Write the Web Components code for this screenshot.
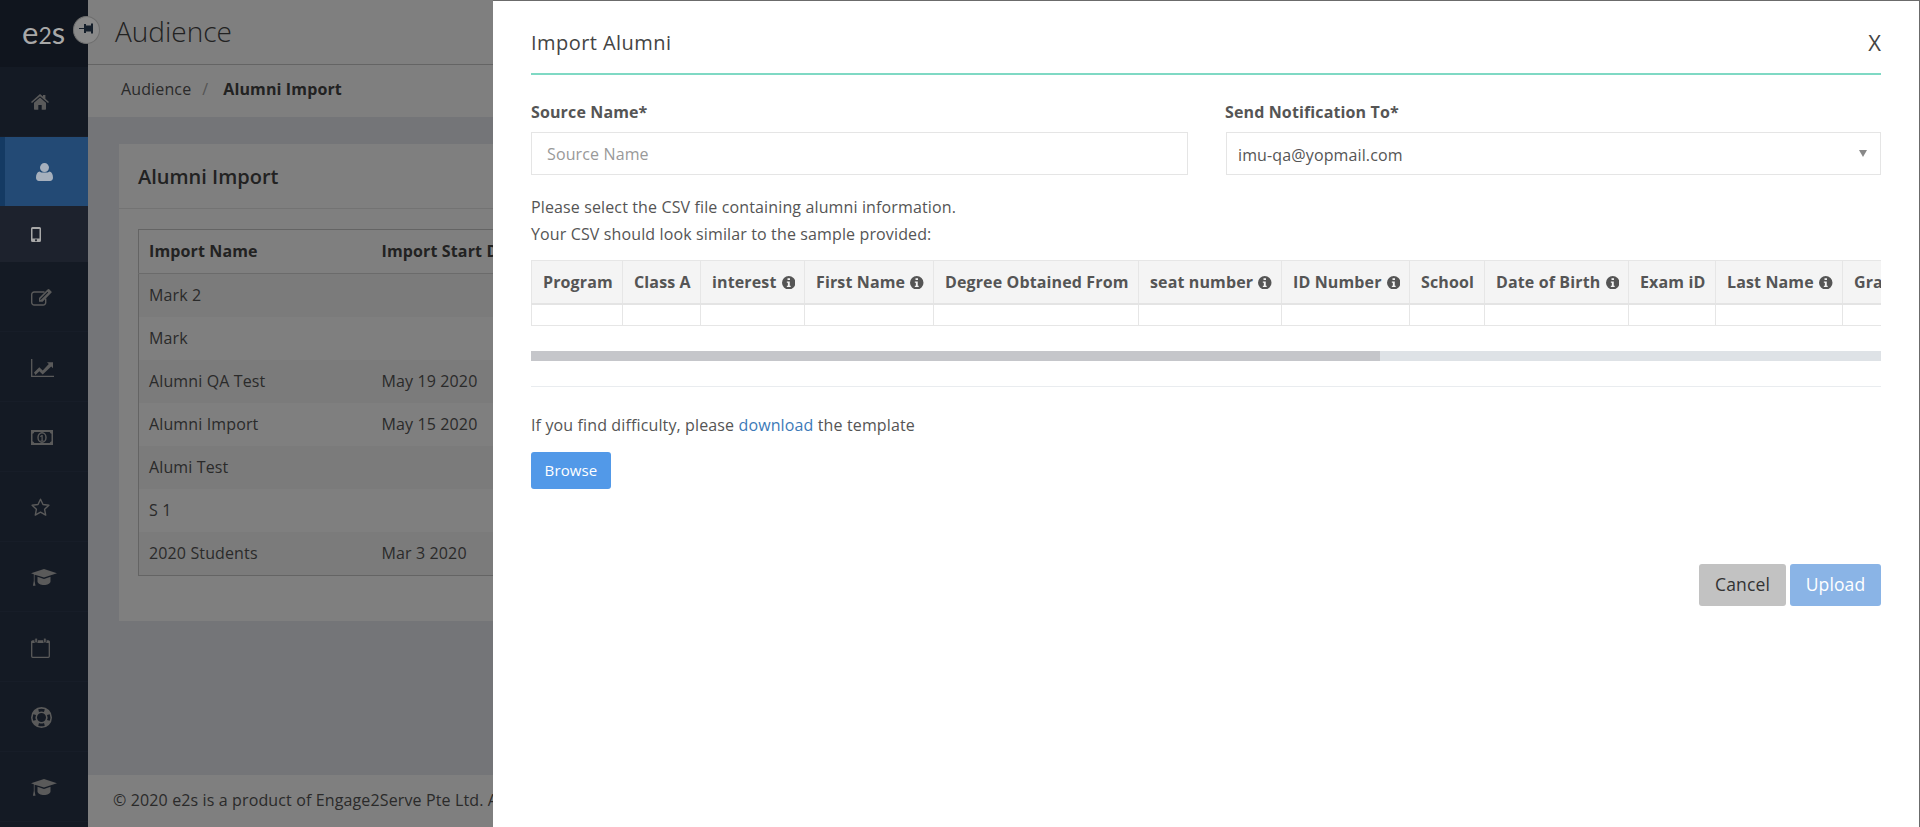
<!DOCTYPE html>
<html lang="en"><head><meta charset="utf-8"><title>Import Alumni</title>
<style>
html,body{margin:0;padding:0;height:100%;overflow:hidden}
body{font-family:"Open Sans","Noto Sans",sans-serif;font-size:14px;color:#444}
</style></head><body>
<e2s-app></e2s-app>
<script>
const ICONS={
home:'<svg width="18" height="16" viewBox="0 0 18 16"><path fill="currentColor" d="M9 0 L12 2.6V1h2.4v3.7L18 8l-1 1.1L9 2.2 1 9.1 0 8z"/><path fill="currentColor" d="M9 3.6l6 5.2V15a.7.7 0 0 1-.7.7H10.7V11H7.3v4.7H3.7A.7.7 0 0 1 3 15V8.8z"/></svg>',
user:'<svg width="17" height="18" viewBox="0 0 17 18" style="margin-left:5px"><circle cx="8.5" cy="4.6" r="4.5" fill="currentColor"/><path fill="currentColor" d="M3.4 8.4C5 10 12 10 13.6 8.4 16 9 17 11.500 17 14.800 17 16.800 15.800 18 14 18H3C1.200 18 0 16.800 0 14.800 0 11.500 1 9 3.400 8.400z"/></svg>',
mobile:'<svg width="10" height="15" viewBox="0 0 10 15"><path fill="currentColor" fill-rule="evenodd" d="M1.500 0h7A1.500 1.500 0 0 1 10 1.500v12A1.500 1.500 0 0 1 8.500 15h-7A1.500 1.500 0 0 1 0 13.500v-12A1.500 1.500 0 0 1 1.500 0zM1.500 2v9.500h7V2zM5 12.200a1 1 0 1 0 .01 0z"/></svg>',
edit:'<svg width="21" height="17" viewBox="0 0 21 17"><path fill="none" stroke="currentColor" stroke-width="1.400" d="M13.500 3H3.200A2.500 2.500 0 0 0 .7 5.500v8a2.500 2.500 0 0 0 2.500 2.500h9a2.500 2.500 0 0 0 2.500-2.500V9.500"/><path fill="currentColor" d="M8 9l8-8 .9-.7a1 1 0 0 1 1.300 0l2.200 2.200a1 1 0 0 1 0 1.300l-.8.800-8 8.200H8z"/><path fill="#141a24" d="M9 10.300l7.500-7.500.7.700L9.700 11z"/></svg>',
chart:'<svg width="23" height="18" viewBox="0 0 23 18"><path fill="none" stroke="currentColor" stroke-width="1.300" d="M.7 0v17.300H23"/><path fill="currentColor" d="M3 13.500l5.300-5.300 3.400 3.200L17.800 5 16 3.200h6v6l-1.800-1.800-8.500 8.200-3.400-3.300-3.800 3.600z"/></svg>',
money:'<svg width="22" height="15" viewBox="0 0 22 15"><path fill="currentColor" fill-rule="evenodd" d="M0 0h22v15H0zM3.300 2A2.500 2.500 0 0 1 1.500 3.800v7.400A2.500 2.500 0 0 1 3.300 13h15.400a2.500 2.500 0 0 1 1.800-1.800V3.800A2.500 2.500 0 0 1 18.700 2z"/><ellipse cx="11" cy="7.500" rx="4" ry="4.800" fill="none" stroke="currentColor" stroke-width="1.400"/><path fill="currentColor" d="M9.500 10.400h1V6.400l-1 .7-.5-.8 1.700-1.300h1v5.400h1v.9H9.500z"/></svg>',
star:'<svg width="19" height="19" viewBox="0 0 19 19"><path fill="none" stroke="currentColor" stroke-width="1.400" stroke-linejoin="round" d="M9.500 1.200l2.500 5.300 5.900.8-4.300 4 1.100 5.800-5.200-2.900-5.200 2.900 1.100-5.800-4.300-4 5.900-.8z"/></svg>',
grad:'<svg width="26" height="18" viewBox="0 0 26 18"><path fill="currentColor" d="M13 0l13 4.200L13 8.600 5.600 6.200 3.600 5.700V12l.9 4.700H1.900L2.800 12V5.200L0 4.200z"/><path fill="currentColor" d="M6.500 7.800L13 10l6.500-2.200v4.600c0 1.900-3.200 3.500-6.500 3.500s-6.500-1.600-6.500-3.500z"/></svg>',
cal:'<svg width="19" height="20" viewBox="0 0 19 20"><path fill="none" stroke="currentColor" stroke-width="1.300" d="M1.700 2.900h15.600a1 1 0 0 1 1 1v14.400a1 1 0 0 1-1 1H1.700a1 1 0 0 1-1-1V3.900a1 1 0 0 1 1-1z"/><path fill="currentColor" d="M.7 3h17.600v2H.7z"/><rect x="3.800" y="0" width="2.600" height="5" rx="1.200" fill="currentColor" stroke="#141a24" stroke-width=".8"/><rect x="12.600" y="0" width="2.600" height="5" rx="1.200" fill="currentColor" stroke="#141a24" stroke-width=".8"/></svg>',
ring:'<svg width="21" height="21" viewBox="0 0 21 21"><path fill="currentColor" fill-rule="evenodd" d="M10.500 0a10.500 10.500 0 1 1 0 21 10.500 10.500 0 0 1 0-21zM10.500 6a4.500 4.500 0 1 0 0 9 4.500 4.500 0 0 0 0-9z"/><path fill="#141a24" d="M7.200 2.300a8.800 8.800 0 0 1 6.600 0L13 5a6 6 0 0 0-5 0zM18.700 7.200a8.800 8.800 0 0 1 0 6.600L16 13a6 6 0 0 0 0-5zM13.800 18.700a8.800 8.800 0 0 1-6.600 0L8 16a6 6 0 0 0 5 0zM2.300 13.800a8.800 8.800 0 0 1 0-6.600L5 8a6 6 0 0 0 0 5z"/></svg>',
pin:'<svg width="15" height="13" viewBox="0 0 15 13"><path fill="currentColor" d="M0 6h5V2h2v1.500h5V1.500h2v10h-2V9.500H7V11H5V7H0z"/></svg>'
};
function def(name,html,render){
  customElements.define(name,class extends HTMLElement{
    constructor(){super();const r=this.attachShadow({mode:'open'});r.innerHTML=html;}
    connectedCallback(){if(render)render.call(this,this.shadowRoot);}
  });
}
def('e2s-nav-item',`<style>
:host{display:flex;align-items:center;padding:2px 0 0 31px;box-sizing:border-box;height:70px;color:#5a5a5a;border-bottom:1px solid #171d28}
:host([icon=home]){padding-top:0}
:host([active]){height:69px;color:#a6b0bd;background:#234a75;border-left:5px solid #143a63;padding:0 0 0 26px;border-bottom:0}
:host([sub]){height:56px;background:#1d222d;border-bottom:0;color:#a8a8a8;padding-top:0}
svg{display:block}
</style><span id="i"></span>`,function(r){r.getElementById('i').innerHTML=ICONS[this.getAttribute('icon')];r.getElementById('i').style.display='block';});

def('e2s-sidebar',`<style>
:host{display:block;background:#141a24;position:relative;z-index:6}
.logo{height:67px;background:#10151e;display:flex;align-items:center;padding:0 0 3px 22px;box-sizing:border-box;color:#a8a8a8;font:400 31px/1 "Lato","Open Sans",sans-serif}
.logo small{font-size:23px}
.pin{position:absolute;left:73px;top:16px;width:27px;height:28px;box-sizing:border-box;border-radius:50%;background:#898989;border:1px solid #6f6f6f;color:#16202c;display:flex;align-items:center;justify-content:center}
.pin svg{display:block;margin-top:-3px}
</style><div class="logo"><span>e<small>2</small>s</span></div><div class="pin" id="pin"></div><slot></slot>`,function(r){r.getElementById('pin').innerHTML=ICONS.pin;});

def('e2s-topbar',`<style>
:host{display:flex;align-items:center;height:65px;box-sizing:border-box;background:#fff;border-bottom:1px solid #c8c8c8;padding:0 0 3px 27px;font:300 28px/1 "Open Sans",sans-serif;color:#444}
</style><slot></slot>`);
def('e2s-crumbs',`<style>
:host{display:flex;align-items:center;height:52px;box-sizing:border-box;background:#fff;padding:0 0 5px 33px;font:400 16px/1 "Open Sans",sans-serif;letter-spacing:.13px;color:#555}
.s{color:#aaa;margin:0 15px 0 11px}b{font-weight:700;color:#444}
</style><span>Audience</span><span class="s">/</span><b><slot></slot></b>`);
def('e2s-card',`<style>
:host{display:block;background:#fff;height:477px;box-sizing:border-box}
.h{height:65px;box-sizing:border-box;border-bottom:1px solid #e6e6e6;display:flex;align-items:center;padding:2px 19px 0;font:600 20px/1 "Open Sans",sans-serif;color:#444}
.b{padding:20px 19px}
</style><div class="h"><slot name="title"></slot></div><div class="b"><slot></slot></div>`);
def('e2s-import-table',`<style>
:host{display:block;font:400 16px/1 "Open Sans",sans-serif;letter-spacing:.13px;color:#555}
table{border-collapse:collapse;width:100%;table-layout:fixed;border:1px solid #c8c8c8}
th{font-weight:700;text-align:left;height:44px;padding:0 0 2px 10px;color:#444;border-bottom:1px solid #d6d6d6;box-sizing:border-box}
td{height:43px;padding:0 0 0 10px;box-sizing:border-box;white-space:nowrap}
tbody tr:last-child td{height:44px;padding-bottom:1px}
tbody tr:nth-child(odd){background:#f7f7f7}
</style><table><colgroup><col style="width:233px"><col></colgroup>
<thead><tr><th>Import Name</th><th>Import Start Date</th></tr></thead>
<tbody>
<tr><td>Mark 2</td><td></td></tr><tr><td>Mark</td><td></td></tr>
<tr><td>Alumni QA Test</td><td>May 19 2020</td></tr><tr><td>Alumni Import</td><td>May 15 2020</td></tr>
<tr><td>Alumi Test</td><td></td></tr><tr><td>S 1</td><td></td></tr>
<tr><td>2020 Students</td><td>Mar 3 2020</td></tr>
</tbody></table>`);
def('e2s-footer',`<style>
:host{display:flex;align-items:center;height:52px;box-sizing:border-box;background:#fff;padding:0 0 2px 25px;font:400 16px/1 "Open Sans",sans-serif;letter-spacing:.13px;color:#555;white-space:nowrap}
</style><slot></slot>`);
def('e2s-info',`<style>
:host{display:inline-block;width:13.500px;height:13.500px;vertical-align:-1.500px;margin-left:1px}
svg{display:block}
</style><svg width="13.500" height="13.500" viewBox="0 0 12 12"><path fill="#555" fill-rule="evenodd" d="M6 0a6 6 0 1 1 0 12A6 6 0 0 1 6 0zM4.900 1.900v1.700h2.200V1.900zM4.300 4.800v1.100h.9v2.800h-.9v1.100h3.400V8.700h-.8V4.800z"/></svg>`);
def('e2s-field',`<style>
:host{display:block;font:400 16px/20px "Open Sans",sans-serif;letter-spacing:.13px;color:#555}
label{display:block;font-weight:700;line-height:20px;color:#555;margin-bottom:10px}
.box{height:43px;box-sizing:border-box;border:1px solid #e5e5e5;display:flex;align-items:center;padding:1px 15px 0;background:#fff}
:host([select]) .box{padding:2px 11px 0;justify-content:space-between}
:host([select]) label{margin-left:-1px}
.ph{color:#999}
.arrow{width:0;height:0;border:4px solid transparent;border-top:7px solid #888;border-bottom:0;margin-right:2px;margin-top:-2px}
</style><label id="l"></label><div class="box" id="b"></div>`,function(r){
  r.getElementById('l').textContent=this.getAttribute('label');
  const b=r.getElementById('b');
  if(this.hasAttribute('select')){b.innerHTML='<span></span><i class="arrow"></i>';b.firstChild.textContent=this.getAttribute('value');}
  else{b.innerHTML='<span class="ph"></span>';b.firstChild.textContent=this.getAttribute('placeholder');}
});
const COLS=[['Program',91,0],['Class A',78,0],['interest',104,1],['First Name',129,1],['Degree Obtained From',205,0],['seat number',143,1],['ID Number',128,1],['School',75,0],['Date of Birth',144,1],['Exam iD',87,0],['Last Name',127,1],['Gra',39,0]];
def('e2s-sample-table',`<style>
:host{display:block;overflow:hidden;width:1350px;font:700 16px/1 "Open Sans",sans-serif;color:#555}
table{border-collapse:collapse;table-layout:fixed;width:1350px}
th{background:#f4f4f4;height:43px;box-sizing:border-box;padding:0 0 0 11px;text-align:left;white-space:nowrap;border:1px solid #e6e6e6;border-bottom:2px solid #e4e4e4;font-weight:700;overflow:hidden}
td{height:22px;box-sizing:border-box;border:1px solid #e6e6e6;padding:0}
th:last-child,td:last-child{border-right:0}
</style><table><colgroup id="c"></colgroup><thead><tr id="h"></tr></thead><tbody><tr id="d"></tr></tbody></table>`,function(r){
  for(const [t,w,i] of COLS){
    const c=document.createElement('col');c.style.width=w+'px';r.getElementById('c').append(c);
    const th=document.createElement('th');th.textContent=t+(i?' ':'');if(i)th.append(document.createElement('e2s-info'));r.getElementById('h').append(th);
    r.getElementById('d').append(document.createElement('td'));
  }
});
def('e2s-button',`<style>
:host{display:inline-flex;align-items:center;justify-content:center;box-sizing:border-box;border-radius:3px;font:400 17.500px/1 "Open Sans",sans-serif;height:42px;color:#fff}
:host([kind=browse]){background:#5299e8;height:37px;width:80px;font-size:15px;padding-bottom:1px}
:host([kind=cancel]){background:#c2c2c2;color:#333;width:87px}
:host([kind=upload]){background:#8ab4e6;width:91px}
</style><slot></slot>`);
def('e2s-modal',`<style>
:host{display:block;position:absolute;left:493px;top:0;right:0;bottom:0;z-index:5;background:#fff;box-sizing:border-box;border-top:1px solid #6b6b6b;border-right:1px solid #6b6b6b;padding:0 38px 0 38px;font:400 16px/27px "Open Sans",sans-serif;letter-spacing:.13px;color:#555;overflow:hidden}
.head{height:74px;box-sizing:border-box;border-bottom:2px solid #7fd9c4;display:flex;align-items:center;justify-content:space-between;padding-top:12px;font-size:20px;line-height:1;font-weight:500;letter-spacing:.45px;color:#444}
.x{font-weight:400;font-size:22px;letter-spacing:0;color:#444;margin-top:-2px}
.row{display:grid;grid-template-columns:657px 655px;column-gap:38px;margin-top:27px}
p{margin:19px 0 12px}
.bar{display:flex;height:10px;background:#dee2e6;margin-top:25px}
.thumb{width:849px;background:#c5c6ca}
hr{border:0;border-top:1px solid #e9ecef;margin:25px 0 28px}
.dl{line-height:20px;margin-bottom:17px}
a{color:#3d7ab8;text-decoration:none}
.foot{display:flex;justify-content:flex-end;gap:4px;margin-top:75px}
</style>
<div class="head"><span>Import Alumni</span><span class="x">X</span></div>
<div class="row"><e2s-field label="Source Name*" placeholder="Source Name"></e2s-field><e2s-field select label="Send Notification To*" value="imu-qa@yopmail.com"></e2s-field></div>
<p>Please select the CSV file containing alumni information.<br>Your CSV should look similar to the sample provided:</p>
<e2s-sample-table></e2s-sample-table>
<div class="bar"><div class="thumb"></div></div>
<hr>
<div class="dl">If you find difficulty, please <a href="#">download</a> the template</div>
<e2s-button kind="browse">Browse</e2s-button>
<div class="foot"><e2s-button kind="cancel">Cancel</e2s-button><e2s-button kind="upload">Upload</e2s-button></div>`);
def('e2s-app',`<style>
:host{display:grid;grid-template-columns:88px 1fr;height:827px;width:1920px;position:relative;overflow:hidden;background:#e8ebf1}
main{display:flex;flex-direction:column;min-width:0}
.content{flex:1;padding:27px 30px 0 31px}
.scrim{position:absolute;inset:0;background:rgba(0,0,0,.5);z-index:4}
</style>
<e2s-sidebar>
<e2s-nav-item icon="home"></e2s-nav-item>
<e2s-nav-item icon="user" active></e2s-nav-item>
<e2s-nav-item icon="mobile" sub></e2s-nav-item>
<e2s-nav-item icon="edit"></e2s-nav-item>
<e2s-nav-item icon="chart"></e2s-nav-item>
<e2s-nav-item icon="money"></e2s-nav-item>
<e2s-nav-item icon="star"></e2s-nav-item>
<e2s-nav-item icon="grad"></e2s-nav-item>
<e2s-nav-item icon="cal"></e2s-nav-item>
<e2s-nav-item icon="ring"></e2s-nav-item>
<e2s-nav-item icon="grad"></e2s-nav-item>
</e2s-sidebar>
<main>
<e2s-topbar>Audience</e2s-topbar>
<e2s-crumbs>Alumni Import</e2s-crumbs>
<div class="content"><e2s-card><span slot="title">Alumni Import</span><e2s-import-table></e2s-import-table></e2s-card></div>
<e2s-footer>© 2020 e2s is a product of Engage2Serve Pte Ltd. All rights reserved.</e2s-footer>
</main>
<div class="scrim"></div>
<e2s-modal></e2s-modal>`);
</script>
</body></html>
